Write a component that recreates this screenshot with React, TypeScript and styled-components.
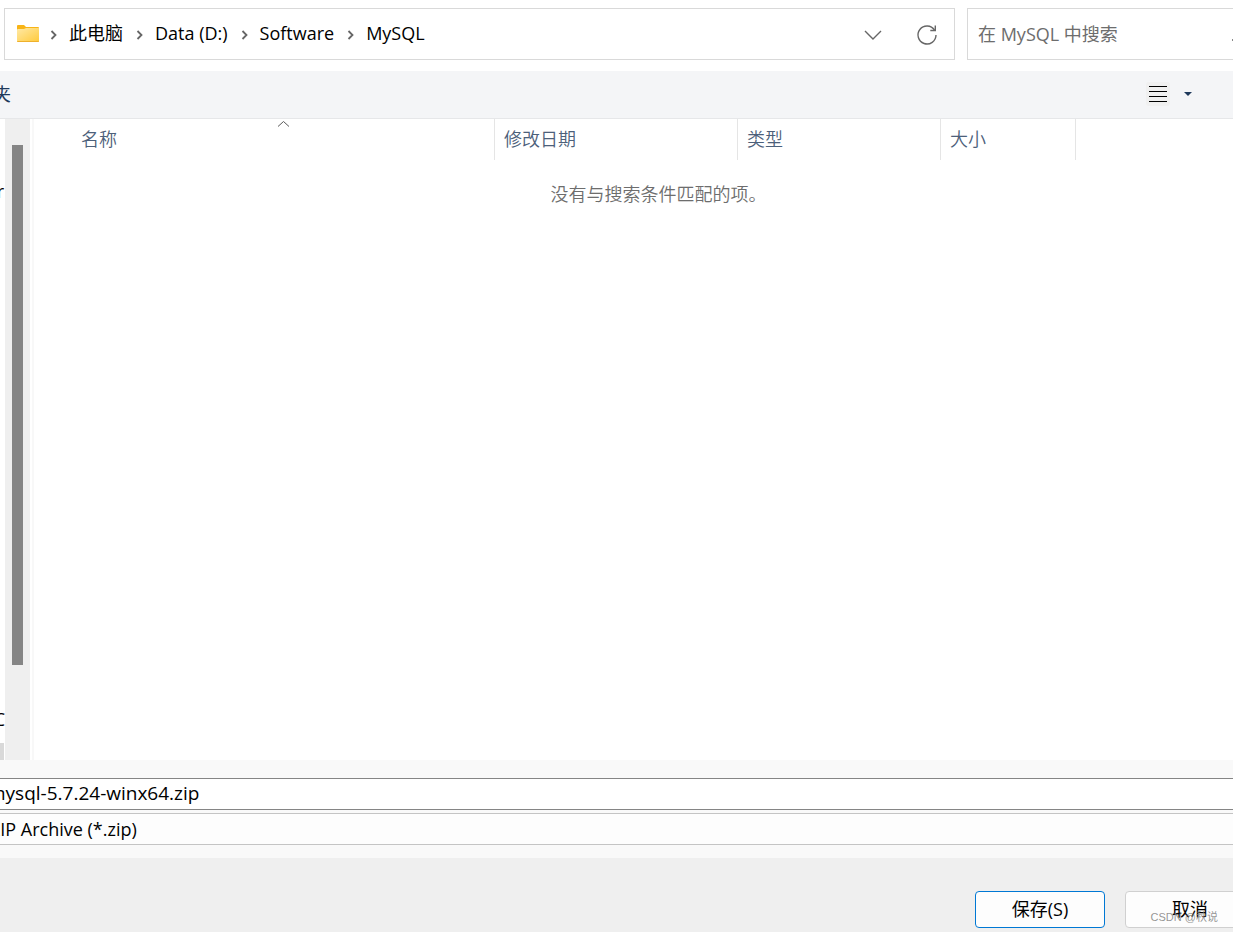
import React from "react";
import styled, { createGlobalStyle } from "styled-components";

const Global = createGlobalStyle`
  *, *::before, *::after { box-sizing: border-box; }
  body {
    margin: 0;
    background: #fff;
    color: #000;
    font: 18px/24px "Open Sans", "Noto Sans CJK SC", sans-serif;
  }
  button, input, select { font: inherit; color: inherit; margin: 0; }
`;

const Dialog = styled.main`
  display: flex;
  flex-direction: column;
  min-height: 100vh;
  overflow: hidden;
`;

const LocationRow = styled.header`
  display: flex;
  gap: 12px;
  padding: 8px 0 11px 4px;
`;

const AddressBar = styled.nav`
  flex: 1 1 0;
  min-width: 0;
  height: 52px;
  display: flex;
  align-items: center;
  padding: 0 12px;
  border: 1px solid #d9d9d9;
`;

const Crumbs = styled.ol`
  flex: 1;
  display: flex;
  align-items: center;
  margin: 0;
  padding: 0 0 2px;
  list-style: none;
  white-space: nowrap;
`;

const Crumb = styled.li`
  display: flex;
  align-items: center;
  &:first-child { margin-left: -2px; }
`;

const CrumbLink = styled.a`
  color: #000;
  text-decoration: none;
`;

const Separator = styled.svg`
  width: 7px;
  height: 10px;
  margin: 3px 12px 0 13px;
  fill: none;
  stroke: #666;
  stroke-width: 1.8;
`;

const IconButton = styled.button`
  display: flex;
  align-items: center;
  justify-content: center;
  width: 30px;
  height: 36px;
  padding: 0;
  border: 0;
  background: none;
`;

const AddressActions = styled.div`
  display: flex;
  gap: 24px;
  padding-top: 2px;
`;

const SearchBox = styled.label`
  flex: 0 0 266px;
  height: 52px;
  display: flex;
  align-items: center;
  border: 1px solid #d9d9d9;
  border-right: 0;
`;

const SearchInput = styled.input`
  flex: 1;
  min-width: 0;
  padding: 0 0 0 10px;
  border: 0;
  outline: 0;
  background: none;
  &::placeholder { color: #6d6d6d; opacity: 1; }
`;

const SearchIcon = styled.svg`
  flex: none;
  width: 1px;
  height: 14px;
`;

const Toolbar = styled.div`
  display: flex;
  align-items: center;
  justify-content: space-between;
  height: 48px;
  padding: 0 30px 2px 0;
  background: #f4f5f7;
  border-bottom: 1px solid #e6e7e9;
`;

const NewFolder = styled.button`
  margin-left: -79px;
  padding: 0;
  border: 0;
  background: none;
  color: #1e395b;
  white-space: nowrap;
`;

const ViewTools = styled.div`
  display: flex;
  align-items: center;
`;

const Body = styled.div`
  flex: 1;
  display: flex;
  min-height: 420px;
`;

const Sidebar = styled.aside`
  flex: 0 0 34px;
  display: flex;
  border-right: 2px solid #f8f8f8;
`;

const Tree = styled.div`
  width: 5px;
  display: flex;
  flex-direction: column;
  align-items: flex-end;
  justify-content: space-between;
  overflow: hidden;
  padding-top: 60px;
`;

const TreeLabel = styled.span`
  margin-right: 1px;
`;

const TreeEnd = styled.div`
  display: flex;
  flex-direction: column;
  align-items: flex-end;
  gap: 12px;
  &::after {
    content: "";
    width: 20px;
    height: 17px;
    margin-right: 1px;
    background: #d9d9d9;
  }
`;

const ScrollTrack = styled.div`
  width: 25px;
  padding: 26px 7px 95px;
  background: #efefef;
`;

const ScrollThumb = styled.div`
  height: 100%;
  background: #858585;
`;

const Files = styled.div`
  flex: 1;
  min-width: 0;
`;

const FileTable = styled.table`
  width: 100%;
  table-layout: fixed;
  border-collapse: separate;
  border-spacing: 0;
`;

const Column = styled.th<{ $width?: number; $first?: boolean }>`
  position: relative;
  width: ${(p) => (p.$width ? `${p.$width}px` : "auto")};
  height: 41px;
  padding: 0 0 2px ${(p) => (p.$first ? 47 : 9)}px;
  border-right: ${(p) => (p.$width ? "1px solid #e5e5e5" : "0")};
  color: #4c607a;
  font-weight: 350;
  text-align: left;
`;

const SortMark = styled.svg`
  position: absolute;
  top: 1px;
  left: 50%;
  margin-left: 13px;
  width: 13px;
  height: 7px;
  fill: none;
  stroke: #5a5a5a;
`;

const EmptyCell = styled.td`
  padding: 22px 0 0 50px;
  color: #6d6d6d;
  font-weight: 350;
  text-align: center;
`;

const Fields = styled.div`
  display: flex;
  flex-direction: column;
  gap: 3px;
  padding: 18px 0 13px;
  margin: 0 -24px 0 -16px;
  background: #f9f9f9;
`;

const FileName = styled.input`
  width: 100%;
  height: 32px;
  padding: 0 0 2px 3px;
  border: 1px solid #858585;
  border-radius: 0;
  background: #fff;
  font-size: 19px;
  outline: 0;
`;

const FileType = styled.select`
  width: 100%;
  height: 32px;
  padding: 0 0 0 5px;
  border: 1px solid #c4c4c4;
  border-radius: 0;
  background: #fdfdfd;
  appearance: none;
  outline: 0;
`;

const Footer = styled.footer`
  position: relative;
  display: flex;
  justify-content: flex-end;
  gap: 20px;
  padding: 33px 0 4px;
  background: #efefef;
`;

const ActionButton = styled.button<{ $primary?: boolean }>`
  width: 130px;
  height: 37px;
  padding: 0 0 2px;
  border: 1px solid ${(p) => (p.$primary ? "#0078d4" : "#d0d0d0")};
  border-radius: 4px;
  background: #fdfdfd;
  &:last-of-type { margin-right: -22px; }
`;

const Watermark = styled.span`
  position: absolute;
  right: 15px;
  bottom: 6px;
  color: rgba(130, 130, 130, 0.85);
  font: 11px/18px "Liberation Sans", "Noto Sans CJK SC", sans-serif;
  pointer-events: none;
`;

const path = ["此电脑", "Data (D:)", "Software", "MySQL"];

function FolderIcon() {
  return (
    <svg width="22" height="18" viewBox="0 0 22 18" aria-hidden="true">
      <defs>
        <linearGradient id="folder" x1="0" y1="0" x2="1" y2="1">
          <stop offset="0" stopColor="#ffe9a6" />
          <stop offset="1" stopColor="#ffca3a" />
        </linearGradient>
      </defs>
      <path d="M0 1q0-1 1-1h6l2 2h12q1 0 1 1v5H0z" fill="#f8b416" />
      <path d="M0 5q0-1 1-1h6l2-1h13v13q0 1-1 1H1q-1 0-1-1z" fill="url(#folder)" />
      <path d="M0 16h22q0 1-1 1H1q-1 0-1-1z" fill="#eeb02c" />
    </svg>
  );
}

export default function App() {
  return (
    <Dialog>
      <Global />
      <LocationRow>
        <AddressBar aria-label="地址">
          <FolderIcon />
          <Crumbs>
            {path.map((name) => (
              <Crumb key={name}>
                <Separator viewBox="0 0 7 10" aria-hidden="true">
                  <path d="M1.500 1 5.500 5 1.500 9" />
                </Separator>
                <CrumbLink href="#">{name}</CrumbLink>
              </Crumb>
            ))}
          </Crumbs>
          <AddressActions>
            <IconButton type="button" aria-label="以前的位置">
              <svg width="18" height="10" viewBox="0 0 18 10" fill="none" stroke="#666" strokeWidth="1.4">
                <path d="M1 1l8 8 8-8" />
              </svg>
            </IconButton>
            <IconButton type="button" aria-label="刷新">
              <svg width="22" height="22" viewBox="0 0 22 22" fill="none" stroke="#666" strokeWidth="1.400">
                <path d="M18.500 6A9 9 0 1 0 20 11" />
                <path d="M19.300 1.500v5h-5" />
              </svg>
            </IconButton>
          </AddressActions>
        </AddressBar>
        <SearchBox>
          <SearchInput type="text" placeholder="在 MySQL 中搜索" aria-label="搜索" />
          <SearchIcon viewBox="0 0 1 14" aria-hidden="true">
            <path d="M0 12h1v2H0z" fill="#888" />
          </SearchIcon>
        </SearchBox>
      </LocationRow>

      <Toolbar>
        <NewFolder type="button">新建文件夹</NewFolder>
        <ViewTools>
          <IconButton type="button" aria-label="视图">
            <svg width="24" height="24" viewBox="0 0 24 24">
              <rect width="24" height="24" rx="3" fill="#f0f0f0" />
              <path d="M3 4.500h18M3 9.500h18M3 14.500h18M3 19.500h18" stroke="#000" />
            </svg>
          </IconButton>
          <IconButton type="button" aria-label="更多选项">
            <svg width="8" height="4" viewBox="0 0 8 4">
              <path d="M0 0h8L4 4z" fill="#1e395b" />
            </svg>
          </IconButton>
        </ViewTools>
      </Toolbar>

      <Body>
        <Sidebar>
          <Tree>
            <TreeLabel>r</TreeLabel>
            <TreeEnd>C</TreeEnd>
          </Tree>
          <ScrollTrack>
            <ScrollThumb />
          </ScrollTrack>
        </Sidebar>
        <Files>
          <FileTable>
            <thead>
              <tr>
                <Column $width={461} $first aria-sort="ascending">
                  名称
                  <SortMark viewBox="0 0 13 7" aria-hidden="true">
                    <path d="M1 6.500l5.500-5 5.500 5" />
                  </SortMark>
                </Column>
                <Column $width={243}>修改日期</Column>
                <Column $width={203}>类型</Column>
                <Column $width={135}>大小</Column>
                <Column aria-hidden="true" />
              </tr>
            </thead>
            <tbody>
              <tr>
                <EmptyCell colSpan={5}>没有与搜索条件匹配的项。</EmptyCell>
              </tr>
            </tbody>
          </FileTable>
        </Files>
      </Body>

      <Fields>
        <FileName type="text" aria-label="文件名" defaultValue="mysql-5.7.24-winx64.zip" />
        <FileType aria-label="保存类型">
          <option>ZIP Archive (*.zip)</option>
        </FileType>
      </Fields>

      <Footer>
        <ActionButton type="button" $primary>保存(S)</ActionButton>
        <ActionButton type="button">取消</ActionButton>
        <Watermark>CSDN @秋说</Watermark>
      </Footer>
    </Dialog>
  );
}
